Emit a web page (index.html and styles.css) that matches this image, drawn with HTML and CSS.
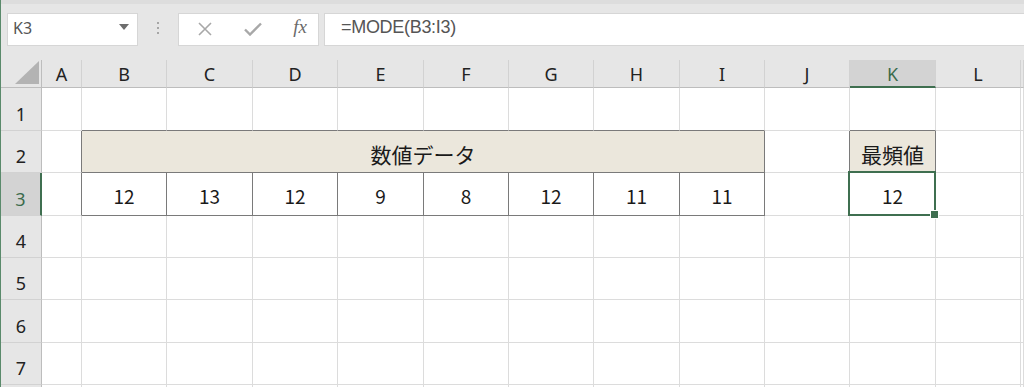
FILE: index.html
```html
<!DOCTYPE html>
<html lang="ja">
<head>
    <meta charset="UTF-8">
    <title>最頻値 - MODE関数</title>
    <link rel="stylesheet" href="styles.css">
</head>
<body>
<div class="app">
    <div class="toolbar">
        <div class="namebox">
            <span>K3</span>
            <svg class="caret" width="10" height="6" viewBox="0 0 10 6"><path d="M0 0h10L5 6z" fill="#6d6d6d"/></svg>
        </div>
        <div class="grip"><i></i><i></i><i></i></div>
        <div class="fxbox">
            <svg width="14" height="14" viewBox="0 0 14 14"><path d="M1 1l12 12M13 1L1 13" stroke="#a8a8a8" stroke-width="1.6" fill="none"/></svg>
            <svg width="18" height="14" viewBox="0 0 18 14"><path d="M1 7.5l5 5L17 1.5" stroke="#a8a8a8" stroke-width="2.4" fill="none"/></svg>
            <span class="fx">fx</span>
        </div>
        <div class="formula">=MODE(B3:I3)</div>
    </div>

    <div class="sheet">
        <!-- column headers -->
        <div class="corner"><svg width="25" height="24" viewBox="0 0 25 24"><path d="M24 0V23H0z" fill="#b3b3b3"/></svg></div>
        <div class="ch">A</div>
        <div class="ch">B</div>
        <div class="ch">C</div>
        <div class="ch">D</div>
        <div class="ch">E</div>
        <div class="ch">F</div>
        <div class="ch">G</div>
        <div class="ch">H</div>
        <div class="ch">I</div>
        <div class="ch">J</div>
        <div class="ch sel">K</div>
        <div class="ch">L</div>
        <div class="ch"></div>

        <!-- row 1 -->
        <div class="rh">1</div>
        <div class="c"></div>
        <div class="c bb"></div>
        <div class="c bb"></div>
        <div class="c bb"></div>
        <div class="c bb"></div>
        <div class="c bb"></div>
        <div class="c bb"></div>
        <div class="c bb"></div>
        <div class="c bb"></div>
        <div class="c"></div>
        <div class="c bb"></div>
        <div class="c"></div>
        <div class="c"></div>

        <!-- row 2 -->
        <div class="rh">2</div>
        <div class="c br"></div>
        <div class="c title merged br bb">数値データ</div>
        <div class="c br"></div>
        <div class="c title br bb">最頻値</div>
        <div class="c"></div>
        <div class="c"></div>

        <!-- row 3 -->
        <div class="rh sel">3</div>
        <div class="c br"></div>
        <div class="c num br bb">12</div>
        <div class="c num br bb">13</div>
        <div class="c num br bb">12</div>
        <div class="c num br bb">9</div>
        <div class="c num br bb">8</div>
        <div class="c num br bb">12</div>
        <div class="c num br bb">11</div>
        <div class="c num br bb">11</div>
        <div class="c"></div>
        <div class="c num active">12</div>
        <div class="c"></div>
        <div class="c"></div>

        <!-- rows 4-7 -->
        <div class="rh">4</div>
        <div class="c"></div><div class="c"></div><div class="c"></div><div class="c"></div><div class="c"></div><div class="c"></div>
        <div class="c"></div><div class="c"></div><div class="c"></div><div class="c"></div><div class="c"></div><div class="c"></div><div class="c"></div>

        <div class="rh">5</div>
        <div class="c"></div><div class="c"></div><div class="c"></div><div class="c"></div><div class="c"></div><div class="c"></div>
        <div class="c"></div><div class="c"></div><div class="c"></div><div class="c"></div><div class="c"></div><div class="c"></div><div class="c"></div>

        <div class="rh">6</div>
        <div class="c"></div><div class="c"></div><div class="c"></div><div class="c"></div><div class="c"></div><div class="c"></div>
        <div class="c"></div><div class="c"></div><div class="c"></div><div class="c"></div><div class="c"></div><div class="c"></div><div class="c"></div>

        <div class="rh">7</div>
        <div class="c"></div><div class="c"></div><div class="c"></div><div class="c"></div><div class="c"></div><div class="c"></div>
        <div class="c"></div><div class="c"></div><div class="c"></div><div class="c"></div><div class="c"></div><div class="c"></div><div class="c"></div>

        <div class="rh"></div>
        <div class="c"></div><div class="c"></div><div class="c"></div><div class="c"></div><div class="c"></div><div class="c"></div>
        <div class="c"></div><div class="c"></div><div class="c"></div><div class="c"></div><div class="c"></div><div class="c"></div><div class="c"></div>
    </div>
</div>
</body>
</html>
```

FILE: styles.css
```css
* {
    box-sizing: border-box;
}
body {
    margin: 0;
    background-color: #ffffff;
    font-family: "Noto Sans", "Noto Sans CJK JP", sans-serif;
    color: #222222;
    overflow: hidden;
}
.app {
    width: 1024px;
    height: 387px;
    border-left: 1px solid #5a8a6b;
    overflow: hidden;
}

/* formula bar area */
.toolbar {
    display: flex;
    align-items: center;
    height: 60px;
    padding: 13px 0 14px 6px;
    background-color: #e6e6e6;
    box-shadow: inset 0 4px 0 #dddddd;
}
.namebox {
    display: flex;
    align-items: center;
    justify-content: space-between;
    width: 131px;
    height: 33px;
    padding: 0 8px 4px 5px;
    background-color: #ffffff;
    border: 1px solid #d6d6d6;
    font-size: 16px;
    color: #555555;
}
.namebox .caret {
    margin-top: -2px;
}
.grip {
    display: flex;
    flex-direction: column;
    align-items: center;
    gap: 3px;
    width: 40px;
    padding-bottom: 4px;
}
.grip i {
    display: block;
    width: 2px;
    height: 2px;
    background-color: #a6a6a6;
}
.fxbox {
    display: flex;
    align-items: center;
    justify-content: space-between;
    width: 141px;
    height: 33px;
    padding: 0 11px 2px 19px;
    background-color: #ffffff;
    border: 1px solid #d6d6d6;
}
.fx {
    font-family: "Liberation Serif", serif;
    font-style: italic;
    font-size: 19px;
    color: #6a6a6a;
    margin-top: -3px;
}
.formula {
    flex: 1;
    height: 33px;
    margin-left: 5px;
    padding: 3px 0 0 16px;
    background-color: #ffffff;
    border: 1px solid #d6d6d6;
    border-right: none;
    font-family: "Liberation Sans", sans-serif;
    font-size: 18px;
    letter-spacing: -0.3px;
    color: #555555;
}

/* grid */
.sheet {
    display: grid;
    grid-template-columns: 41px 40px 85px 86px 85px 86px 85px 85px 86px 85px 85px 86px 85px 1fr;
    grid-template-rows: 28px 43px 42px 43px 42px 42px 43px 42px 2px;
}
.corner {
    display: flex;
    align-items: flex-end;
    justify-content: flex-end;
    padding: 0 1px 2px 0;
    background-color: #e6e6e6;
    border-right: 1px solid #bdbdbd;
    border-bottom: 1px solid #bdbdbd;
}
.ch {
    display: flex;
    align-items: center;
    justify-content: center;
    background-color: #e6e6e6;
    border-right: 1px solid #d2d2d2;
    border-bottom: 1px solid #bdbdbd;
    font-size: 18px;
    padding-top: 1px;
}
.ch.sel {
    background-color: #d3d3d3;
    color: #3b6b4c;
    border-bottom: 2px solid #3f6f50;
}
.rh {
    display: flex;
    align-items: flex-end;
    justify-content: center;
    padding-bottom: 4px;
    background-color: #e6e6e6;
    border-right: 1px solid #bdbdbd;
    border-bottom: 1px solid #d2d2d2;
    font-size: 18px;
}
.rh.sel {
    background-color: #d3d3d3;
    color: #3b6b4c;
    border-right: 2px solid #3f6f50;
}
.c {
    display: flex;
    align-items: flex-end;
    justify-content: center;
    padding-bottom: 5px;
    border-right: 1px solid #dcdcdc;
    border-bottom: 1px solid #dcdcdc;
    font-family: "Noto Sans CJK JP", sans-serif;
    font-size: 19px;
    line-height: 28px;
    color: #1a1a1a;
}
.c.br {
    border-right-color: #7a7a7a;
}
.c.bb {
    border-bottom-color: #7a7a7a;
}
.c.title {
    background-color: #ebe7dc;
    font-size: 21px;
    padding-bottom: 4px;
    white-space: nowrap;
}
.c.merged {
    grid-column: span 8;
}
.c.active {
    position: relative;
}
.c.active::after {
    content: "";
    position: absolute;
    top: -2px;
    left: -2px;
    right: -1px;
    bottom: -1px;
    border: 2px solid #3f6f50;
}
.c.active::before {
    content: "";
    position: absolute;
    right: -4px;
    bottom: -4px;
    width: 7px;
    height: 7px;
    background-color: #3f6f50;
    border: 1px solid #ffffff;
    z-index: 1;
}
```
